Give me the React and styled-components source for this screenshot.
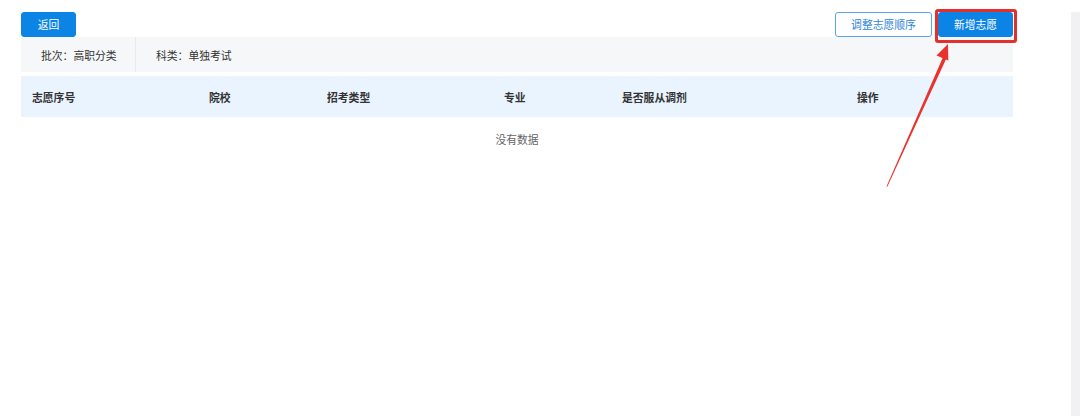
import styled, { createGlobalStyle } from 'styled-components'

const GlobalStyle = createGlobalStyle`
  html, body {
    margin: 0;
    padding: 0;
    background: #fff;
  }
  body {
    font-family: "Noto Sans CJK SC", "Noto Sans", "Liberation Sans", sans-serif;
    font-size: 10.8px;
    color: #333;
  }
`

const Page = styled.div`
  position: relative;
  display: flex;
  width: 1080px;
  height: 416px;
  overflow: hidden;
`

const Main = styled.div`
  width: 992px;
  padding: 12px 0 0 21px;
  margin-right: 58px;
`

const Side = styled.div`
  flex: 1;
  margin-top: 12px;
  background: #f1f1f4;
`

const Toolbar = styled.div`
  display: flex;
  justify-content: space-between;
  align-items: center;
  height: 25px;
`

const Actions = styled.div`
  display: flex;
  gap: 6px;
`

const Button = styled.button`
  position: relative;
  height: 25px;
  width: ${p => p.w}px;
  padding: 0;
  border-radius: 3px;
  font-family: inherit;
  font-size: 10.8px;
  line-height: 23px;
  cursor: pointer;
  border: 1px solid ${p => (p.primary ? '#0c84e6' : '#5aa5e6')};
  background: ${p => (p.primary ? '#0c84e6' : '#fff')};
  color: ${p => (p.primary ? '#fff' : '#2f86d8')};
`

const Highlight = styled.span`
  position: absolute;
  left: -4px;
  right: -5px;
  top: -4px;
  bottom: -7px;
  border: 3px solid #e3302c;
  border-radius: 3px;
  pointer-events: none;
`

const InfoBar = styled.div`
  display: flex;
  height: 35px;
  background: #f6f7f9;
  margin-bottom: 4px;
`

const InfoCell = styled.div`
  display: flex;
  align-items: center;
  box-sizing: border-box;
  width: ${p => (p.w ? `${p.w}px` : 'auto')};
  padding: 0 20px;
  color: #333;
  white-space: nowrap;
  border-right: ${p => (p.divider ? '1px solid #e9eaee' : 'none')};
`

const HeaderRow = styled.div`
  display: grid;
  grid-template-columns: 177px 118px 177px 118px 235px 167px;
  height: 41px;
  background: #eaf4fe;
`

const HeadCell = styled.div`
  display: flex;
  align-items: center;
  padding-left: 11px;
  font-weight: 700;
  color: #333;
`

const Empty = styled.div`
  text-align: center;
  padding-top: 14px;
  line-height: 16px;
  color: #666;
`

const Arrow = styled.svg`
  position: absolute;
  left: 0;
  top: 0;
  pointer-events: none;
`

const columns = ['志愿序号', '院校', '招考类型', '专业', '是否服从调剂', '操作']

export default function App() {
  return (
    <>
      <GlobalStyle />
      <Page>
        <Main>
          <Toolbar>
            <Button primary w={55}>返回</Button>
            <Actions>
              <Button w={97}>调整志愿顺序</Button>
              <Button primary w={75}>
                新增志愿
                <Highlight />
              </Button>
            </Actions>
          </Toolbar>
          <InfoBar>
            <InfoCell divider w={115}>批次：高职分类</InfoCell>
            <InfoCell>科类：单独考试</InfoCell>
          </InfoBar>
          <HeaderRow>
            {columns.map(c => (
              <HeadCell key={c}>{c}</HeadCell>
            ))}
          </HeaderRow>
          <Empty>没有数据</Empty>
        </Main>
        <Side />
        <Arrow width="1080" height="416" viewBox="0 0 1080 416">
          <polygon points="946.8,57.5 943.4,56.2 886.5,186.5 887.3,186.8" fill="#e8322c" />
          <polygon points="948,44 936.5,55.5 948.3,60.5" fill="#e8322c" />
        </Arrow>
      </Page>
    </>
  )
}
